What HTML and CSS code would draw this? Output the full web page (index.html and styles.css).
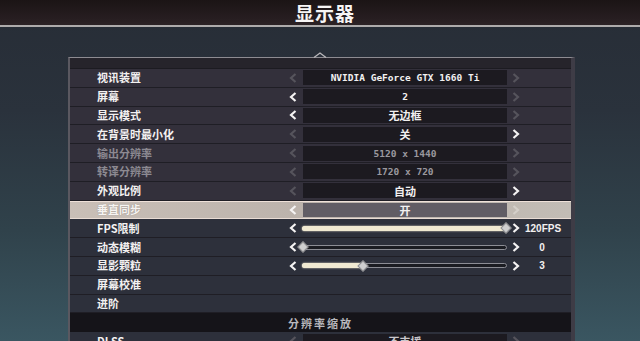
FILE: index.html
```html
<!DOCTYPE html>
<html lang="zh-CN">
<head>
<meta charset="utf-8">
<title>显示器</title>
<link rel="stylesheet" href="styles.css">
</head>
<body>
<header class="topbar"><h1>显示器</h1></header>
<main class="stage">
  <section class="panel">
    <svg class="caret" viewBox="0 0 14 6" width="14" height="6"><polyline points="1,5.5 7,1 13,5.5"/></svg>
    <div class="cap"></div>

    <div class="row">
      <span class="label">视讯装置</span>
      <span class="arr l off"><svg class="chev" viewBox="0 0 8 10"><polyline points="6.5,1 2,5 6.5,9"/></svg></span>
      <span class="val mono">NVIDIA GeForce GTX 1660 Ti</span>
      <span class="arr r off"><svg class="chev" viewBox="0 0 8 10"><polyline points="1.5,1 6,5 1.5,9"/></svg></span>
      <span class="extra"></span>
    </div>
    <div class="row">
      <span class="label">屏幕</span>
      <span class="arr l"><svg class="chev" viewBox="0 0 8 10"><polyline points="6.5,1 2,5 6.5,9"/></svg></span>
      <span class="val mono">2</span>
      <span class="arr r off"><svg class="chev" viewBox="0 0 8 10"><polyline points="1.5,1 6,5 1.5,9"/></svg></span>
      <span class="extra"></span>
    </div>
    <div class="row">
      <span class="label">显示模式</span>
      <span class="arr l"><svg class="chev" viewBox="0 0 8 10"><polyline points="6.5,1 2,5 6.5,9"/></svg></span>
      <span class="val cjk">无边框</span>
      <span class="arr r off"><svg class="chev" viewBox="0 0 8 10"><polyline points="1.5,1 6,5 1.5,9"/></svg></span>
      <span class="extra"></span>
    </div>
    <div class="row">
      <span class="label">在背景时最小化</span>
      <span class="arr l off"><svg class="chev" viewBox="0 0 8 10"><polyline points="6.5,1 2,5 6.5,9"/></svg></span>
      <span class="val cjk">关</span>
      <span class="arr r"><svg class="chev" viewBox="0 0 8 10"><polyline points="1.5,1 6,5 1.5,9"/></svg></span>
      <span class="extra"></span>
    </div>
    <div class="row dis">
      <span class="label">输出分辨率</span>
      <span class="arr l off"><svg class="chev" viewBox="0 0 8 10"><polyline points="6.5,1 2,5 6.5,9"/></svg></span>
      <span class="val mono">5120 x 1440</span>
      <span class="arr r off"><svg class="chev" viewBox="0 0 8 10"><polyline points="1.5,1 6,5 1.5,9"/></svg></span>
      <span class="extra"></span>
    </div>
    <div class="row dis">
      <span class="label">转译分辨率</span>
      <span class="arr l off"><svg class="chev" viewBox="0 0 8 10"><polyline points="6.5,1 2,5 6.5,9"/></svg></span>
      <span class="val mono">1720 x 720</span>
      <span class="arr r off"><svg class="chev" viewBox="0 0 8 10"><polyline points="1.5,1 6,5 1.5,9"/></svg></span>
      <span class="extra"></span>
    </div>
    <div class="row">
      <span class="label">外观比例</span>
      <span class="arr l off"><svg class="chev" viewBox="0 0 8 10"><polyline points="6.5,1 2,5 6.5,9"/></svg></span>
      <span class="val cjk">自动</span>
      <span class="arr r"><svg class="chev" viewBox="0 0 8 10"><polyline points="1.5,1 6,5 1.5,9"/></svg></span>
      <span class="extra"></span>
    </div>
    <div class="row hl">
      <span class="label">垂直同步</span>
      <span class="arr l"><svg class="chev" viewBox="0 0 8 10"><polyline points="6.5,1 2,5 6.5,9"/></svg></span>
      <span class="val cjk">开</span>
      <span class="arr r off"><svg class="chev" viewBox="0 0 8 10"><polyline points="1.5,1 6,5 1.5,9"/></svg></span>
      <span class="extra"></span>
    </div>
    <div class="row cool">
      <span class="label">FPS限制</span>
      <span class="arr l"><svg class="chev" viewBox="0 0 8 10"><polyline points="6.5,1 2,5 6.5,9"/></svg></span>
      <span class="slider"><span class="track"><span class="fill" style="width:100%"></span><span class="knob" style="left:100%"></span></span></span>
      <span class="arr r"><svg class="chev" viewBox="0 0 8 10"><polyline points="1.5,1 6,5 1.5,9"/></svg></span>
      <span class="extra">120FPS</span>
    </div>
    <div class="row cool">
      <span class="label">动态模糊</span>
      <span class="arr l"><svg class="chev" viewBox="0 0 8 10"><polyline points="6.5,1 2,5 6.5,9"/></svg></span>
      <span class="slider"><span class="track"><span class="fill" style="width:0%"></span><span class="knob" style="left:0%"></span></span></span>
      <span class="arr r"><svg class="chev" viewBox="0 0 8 10"><polyline points="1.5,1 6,5 1.5,9"/></svg></span>
      <span class="extra">0</span>
    </div>
    <div class="row cool">
      <span class="label">显影颗粒</span>
      <span class="arr l"><svg class="chev" viewBox="0 0 8 10"><polyline points="6.5,1 2,5 6.5,9"/></svg></span>
      <span class="slider"><span class="track"><span class="fill" style="width:29.6%"></span><span class="knob" style="left:29.6%"></span></span></span>
      <span class="arr r"><svg class="chev" viewBox="0 0 8 10"><polyline points="1.5,1 6,5 1.5,9"/></svg></span>
      <span class="extra">3</span>
    </div>
    <div class="row cool">
      <span class="label">屏幕校准</span>
    </div>
    <div class="row cool">
      <span class="label">进阶</span>
    </div>
    <div class="section">分辨率缩放</div>
    <div class="row cool">
      <span class="label">DLSS</span>
      <span class="arr l off"><svg class="chev" viewBox="0 0 8 10"><polyline points="6.5,1 2,5 6.5,9"/></svg></span>
      <span class="val cjk dim">不支援</span>
      <span class="arr r off"><svg class="chev" viewBox="0 0 8 10"><polyline points="1.5,1 6,5 1.5,9"/></svg></span>
      <span class="extra"></span>
    </div>
  </section>
</main>
</body>
</html>
```

FILE: styles.css
```css
html, body {
  margin: 0;
  padding: 0;
  height: 341px;
  overflow: hidden;
}

body {
  width: 640px;
  background: linear-gradient(180deg, #272d36 0px, #2a323c 110px, #30424b 230px, #3a5661 341px);
  font-family: "Noto Sans CJK SC", "Noto Sans", sans-serif;
  color: #f2f0f0;
}

.topbar {
  height: 25px;
  background: linear-gradient(180deg, #1b1415 0%, #261d20 70%, #2c2326 100%);
  border-bottom: 2px solid #aeacac;
  display: flex;
  justify-content: center;
  align-items: center;
}

.topbar h1 {
  margin: 0;
  padding-left: 10px;
  font-size: 19px;
  font-weight: 700;
  letter-spacing: 1px;
  line-height: 25px;
  color: #f7f5f5;
}

.stage {
  padding-top: 30px;
}

.panel {
  position: relative;
  margin-left: 68px;
  width: 507px;
  box-sizing: border-box;
  border-top: 1px solid #8e8c92;
  border-left: 2px solid #5a5860;
  border-right: 4px solid #3e3c46;
  background: #2e2c34;
}

.caret {
  position: absolute;
  left: 243px;
  top: -6px;
}

.caret polyline {
  fill: none;
  stroke: #b9b7ba;
  stroke-width: 1.3;
}

.cap {
  height: 11px;
  box-sizing: border-box;
  background: #26242b;
  border-bottom: 1px solid #1c1b21;
}

.row {
  display: flex;
  align-items: center;
  height: 18.8px;
  box-sizing: border-box;
  border-bottom: 1px solid #1f1e25;
  background: #33303b;
}

.row.cool {
  background: #2d303b;
}

.label {
  width: 216px;
  flex: none;
  box-sizing: border-box;
  padding-left: 27px;
  font-size: 11px;
  font-weight: 700;
  line-height: 1;
  white-space: nowrap;
  color: #f3f1f1;
}

.dis .label {
  color: #8c8991;
}

.arr {
  flex: none;
  display: flex;
  justify-content: center;
  align-items: center;
  color: #f5f3f3;
}

.arr.l {
  width: 14px;
}

.arr.r {
  width: 18px;
}

.arr.off {
  color: #56545c;
}

.chev {
  width: 8px;
  height: 10px;
  display: block;
}

.chev polyline {
  fill: none;
  stroke: currentColor;
  stroke-width: 2.2;
  stroke-linejoin: miter;
}

.val {
  flex: none;
  width: 204px;
  margin-left: 3px;
  height: 15px;
  background: #1c1a20;
  display: flex;
  justify-content: center;
  align-items: center;
  color: #f2f0f0;
  white-space: nowrap;
}

.val.mono {
  font-family: "DejaVu Sans Mono", monospace;
  font-weight: 700;
  font-size: 9.5px;
}

.val.cjk {
  font-size: 11px;
  font-weight: 700;
}

.dis .val {
  color: #9a989e;
}

.val.dim {
  color: #c9c7cc;
}

.extra {
  flex: none;
  width: 46px;
  padding-right: 12px;
  box-sizing: border-box;
  text-align: center;
  font-family: "Liberation Sans", sans-serif;
  font-weight: 700;
  font-size: 10px;
  color: #f3f1f1;
}

/* highlighted row */
.row.hl {
  height: 18.8px;
  background: linear-gradient(90deg, #c9bfb7 0%, #bcb3ac 45%, #c2bcb5 100%);
  border-top: 1px solid #efe1d9;
  border-bottom: 1px solid #e9dcd4;
}

.hl .label {
  color: #f7f4f1;
  text-shadow: 0 0 1px rgba(60, 50, 50, 0.45);
}

.hl .val {
  background: #615d65;
  height: 14px;
}

.hl .arr.off {
  color: #d4cfc9;
}

/* sliders */
.slider {
  flex: none;
  width: 205px;
  margin-left: 2px;
  height: 15px;
  display: flex;
  align-items: center;
}

.track {
  position: relative;
  width: 100%;
  height: 5px;
  box-sizing: border-box;
  border: 1px solid #8c8d95;
  border-radius: 3px;
  background: #1b1c22;
}

.fill {
  position: absolute;
  left: -1px;
  top: -1px;
  height: 5px;
  border-radius: 3px;
  background: #f0e9d1;
  box-shadow: 0 0 2px #f3ecd6;
}

.knob {
  position: absolute;
  top: 50%;
  width: 6px;
  height: 6px;
  margin-top: -4px;
  margin-left: -4px;
  background: #cfcfd0;
  border: 1px solid #8d8d90;
  transform: rotate(45deg);
}

.section {
  height: 18.8px;
  box-sizing: border-box;
  background: #151419;
  display: flex;
  justify-content: center;
  align-items: center;
  font-size: 11px;
  font-weight: 700;
  letter-spacing: 2px;
  color: #b8b7bc;
}
```
